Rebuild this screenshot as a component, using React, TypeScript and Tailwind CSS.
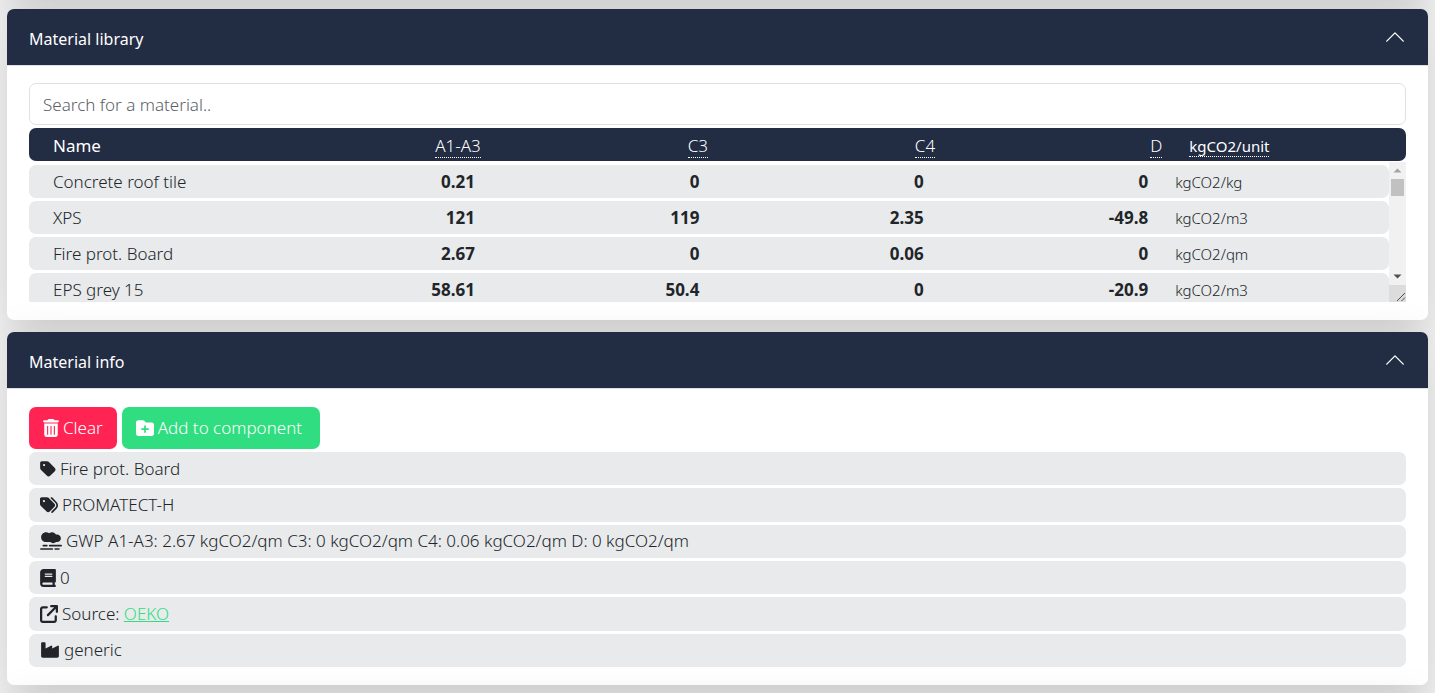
import React from "react";
import {
  FaTrashCan,
  FaFolderPlus,
  FaTag,
  FaTags,
  FaSmog,
  FaBook,
  FaArrowUpRightFromSquare,
  FaIndustry,
} from "react-icons/fa6";

type Material = {
  name: string;
  values: string[];
  unit: string;
};

const materials: Material[] = [
  { name: "Concrete roof tile", values: ["0.21", "0", "0", "0"], unit: "kgCO2/kg" },
  { name: "XPS", values: ["121", "119", "2.35", "-49.8"], unit: "kgCO2/m3" },
  { name: "Fire prot. Board", values: ["2.67", "0", "0.06", "0"], unit: "kgCO2/qm" },
  { name: "EPS grey 15", values: ["58.61", "50.4", "0", "-20.9"], unit: "kgCO2/m3" },
];

const stages = ["A1-A3", "C3", "C4", "D"];

function Columns() {
  return (
    <colgroup>
      <col className="w-[17.25%]" />
      <col className="w-[16.5%]" />
      <col className="w-[16.5%]" />
      <col className="w-[16.5%]" />
      <col className="w-[16.5%]" />
      <col className="w-[16.75%]" />
    </colgroup>
  );
}

function Panel({ title, children }: { title: string; children: React.ReactNode }) {
  const [open, setOpen] = React.useState(true);
  return (
    <section className="rounded-[7px] bg-white shadow-[0_16px_48px_rgba(0,0,0,0.175)]">
      <h2>
        <button
          type="button"
          aria-expanded={open}
          onClick={() => setOpen(!open)}
          className="flex h-14 w-full items-center justify-between rounded-t-[7px] bg-[#222c43] px-[22px] text-left text-base font-normal text-white"
        >
          <span className="pt-1">{title}</span>
          <svg viewBox="0 0 16 16" className="size-[22px]" fill="none" stroke="currentColor" strokeLinecap="round" strokeLinejoin="round" aria-hidden="true">
            <path d="M2 11 8 5l6 6" />
          </svg>
        </button>
      </h2>
      {open && <div className="border-t border-[#dee2e6] px-[22px] pt-[17px] pb-[18px]">{children}</div>}
    </section>
  );
}

function Scrollbar() {
  return (
    <div className="flex w-[17px] shrink-0 flex-col bg-[#f1f1f1]" aria-hidden="true">
      <svg viewBox="0 0 17 17" className="size-[17px]">
        <path d="M4.500 10.500h8l-4-4z" fill="#a3a3a3" />
      </svg>
      <div className="mx-0.5 h-[17px] bg-[#c1c1c1]" />
      <div className="grow" />
      <svg viewBox="0 0 17 17" className="size-[17px]">
        <path d="M4.500 6.500h8l-4 4z" fill="#505050" />
      </svg>
      <svg viewBox="0 0 17 17" className="size-[17px] bg-[#dcdcdc]">
        <path d="M8 16l8-8M12.500 16l3.500-3.500" stroke="#505050" fill="none" />
      </svg>
    </div>
  );
}

function InfoRow({ children }: { children: React.ReactNode }) {
  return <li className="flex items-center gap-1 rounded-[7px] bg-[#e8eaeb] px-[11px]">{children}</li>;
}

export default function App() {
  return (
    <main className="flex flex-col gap-3 overflow-hidden bg-[#f6f6f6] px-[7px] font-['Noto_Sans',sans-serif] text-[17px] leading-6 font-light text-[#212529]">
      <div className="-mt-[83px] h-20 shrink-0 rounded-[7px] bg-white shadow-[0_16px_48px_rgba(0,0,0,0.175)]" />

      <Panel title="Material library">
        <input
          type="text"
          aria-label="Search for a material"
          placeholder="Search for a material.."
          className="mb-[3px] block h-[42px] w-full rounded-[7px] border border-[#dee2e6] bg-white px-[13px] placeholder:text-[#5c6166] placeholder:opacity-100"
        />
        <table className="mb-px w-full table-fixed border-separate border-spacing-0 text-white">
          <Columns />
          <thead>
            <tr className="h-[33px] *:bg-[#222c43] *:px-0 *:pt-0.5 *:pb-0 *:font-normal">
              <th scope="col" className="rounded-l-[7px] text-left">
                <span className="pl-6">Name</span>
              </th>
              {stages.map((stage) => (
                <th key={stage} scope="col" className="text-right">
                  <abbr className="mr-[13px] border-b border-dotted border-white font-light no-underline">{stage}</abbr>
                </th>
              ))}
              <th scope="col" className="rounded-r-[7px] text-left text-[15px]">
                <abbr className="ml-[14px] border-b border-dotted border-white no-underline">kgCO2/unit</abbr>
              </th>
            </tr>
          </thead>
        </table>
        <div className="flex h-[140px]">
          <div className="min-w-0 grow overflow-hidden">
            <table className="w-full table-fixed border-separate border-spacing-x-0 border-spacing-y-[3px]">
              <Columns />
              <tbody>
                {materials.map((material) => (
                  <tr key={material.name} className="h-[33px] *:bg-[#e8eaeb] *:py-0">
                    <td className="rounded-l-[7px] pl-6">{material.name}</td>
                    {material.values.map((value, index) => (
                      <td key={stages[index]} className="pr-[13px] text-right font-bold">
                        {value}
                      </td>
                    ))}
                    <td className="rounded-r-[7px] pl-[14px] text-[15px]">{material.unit}</td>
                  </tr>
                ))}
              </tbody>
            </table>
          </div>
          <Scrollbar />
        </div>
      </Panel>

      <Panel title="Material info">
        <div className="mb-[3px] flex gap-[5px] pt-px text-white">
          <button type="button" className="flex h-[42px] items-center gap-1 rounded-[7px] bg-[#ff2453] px-[14px]">
            <FaTrashCan className="h-[18px] w-4" />
            Clear
          </button>
          <button type="button" className="flex h-[42px] min-w-[198px] items-center gap-1 rounded-[7px] bg-[#30dd80] px-[14px]">
            <FaFolderPlus className="size-[18px]" />
            Add to component
          </button>
        </div>
        <ul className="grid min-h-[215px] auto-rows-fr gap-[3px]">
          <InfoRow>
            <FaTag className="h-[18px] w-4" />
            Fire prot. Board
          </InfoRow>
          <InfoRow>
            <FaTags className="size-[18px]" />
            PROMATECT-H
          </InfoRow>
          <InfoRow>
            <FaSmog className="h-[18px] w-[22px]" />
            GWP A1-A3: 2.67 kgCO2/qm C3: 0 kgCO2/qm C4: 0.06 kgCO2/qm D: 0 kgCO2/qm
          </InfoRow>
          <InfoRow>
            <FaBook className="h-[18px] w-4" />0
          </InfoRow>
          <InfoRow>
            <FaArrowUpRightFromSquare className="size-[18px]" />
            <span>
              Source:{" "}
              <a href="#oeko" className="text-[#30dd80] underline">
                OEKO
              </a>
            </span>
          </InfoRow>
          <InfoRow>
            <FaIndustry className="size-5" />
            generic
          </InfoRow>
        </ul>
      </Panel>

      <div className="-mb-[83px] h-20 shrink-0 rounded-[7px] bg-white shadow-[0_16px_48px_rgba(0,0,0,0.175)]" />
    </main>
  );
}
